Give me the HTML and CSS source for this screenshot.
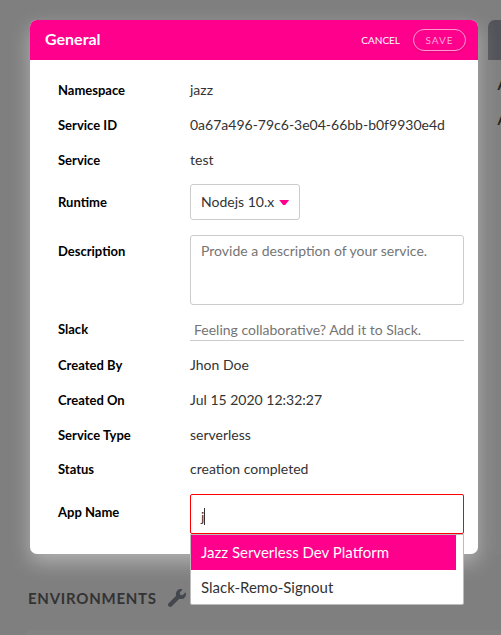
FILE: index.html
```html
<!DOCTYPE html>
<html lang="en">
<head>
<meta charset="utf-8">
<title>Service overview</title>
<link rel="stylesheet" href="styles.css">
</head>
<body>
<main class="page">
  <div class="cards">
    <section class="card">
      <header class="card-header">
        <h1 class="card-title">General</h1>
        <span class="cancel">CANCEL</span>
        <span class="save">SAVE</span>
      </header>
      <div class="card-body">
        <div class="row"><div class="label">Namespace</div><div class="value">jazz</div></div>
        <div class="row"><div class="label">Service ID</div><div class="value">0a67a496-79c6-3e04-66bb-b0f9930e4d</div></div>
        <div class="row"><div class="label">Service</div><div class="value">test</div></div>
        <div class="row row-runtime"><div class="label">Runtime</div>
          <div class="select"><span>Nodejs 10.x</span><span class="caret"></span></div></div>
        <div class="row row-description"><div class="label">Description</div>
          <div class="textarea">Provide a description of your service.</div></div>
        <div class="row row-slack"><div class="label">Slack</div>
          <div class="line-input">Feeling collaborative? Add it to Slack.</div></div>
        <div class="row"><div class="label">Created By</div><div class="value">Jhon Doe</div></div>
        <div class="row"><div class="label">Created On</div><div class="value">Jul 15 2020 12:32:27</div></div>
        <div class="row row-type"><div class="label">Service Type</div><div class="value">serverless</div></div>
        <div class="row"><div class="label">Status</div><div class="value">creation completed</div></div>
        <div class="row row-app"><div class="label">App Name</div>
          <div class="app-field">
            <div class="app-input"><span>j</span><span class="cursor"></span></div>
            <div class="menu">
              <div class="option option-active">Jazz Serverless Dev Platform</div>
              <div class="option">Slack-Remo-Signout</div>
            </div>
          </div></div>
      </div>
    </section>
    <section class="side-card">
      <div class="side-header"></div>
      <div class="side-label">A</div>
      <div class="side-label">A</div>
    </section>
  </div>
  <div class="environments">
    <h2 class="env-title">ENVIRONMENTS</h2>
    <svg class="wrench" viewBox="0 0 512 512" fill="#42484e"><path d="M507.700 109.100c-2.200-9-13.500-12.100-20.100-5.500l-74.400 74.400-67.900-11.300L334 98.900l74.400-74.400c6.600-6.600 3.400-17.900-5.700-20.200-47.400-11.700-99.600.9-136.600 37.900-39.600 39.600-50.500 97.100-34.100 147.200L18.700 402.800c-25 25-25 65.500 0 90.500s65.500 25 90.500 0l213.200-213.200c50.100 16.700 107.500 5.700 147.400-34.200 37.100-37.100 49.700-89.300 37.900-136.800z"/></svg>
  </div>
  <div class="env-panel"></div>
</main>
</body>
</html>
```

FILE: styles.css
```css
* { box-sizing: border-box; }
body {
  margin: 0;
  height: 635px;
  overflow: hidden;
  background: #7f7f7f;
  font-family: Lato, "Liberation Sans", sans-serif;
  font-size: 14px;
  line-height: 20px;
  color: #333;
}
.page { height: 635px; padding-top: 20px; overflow: hidden; }
.cards { display: flex; gap: 10px; padding-left: 30px; }
.card {
  position: relative;
  z-index: 1;
  flex: none;
  width: 448px;
  height: 534px;
  border-radius: 7px;
  background: #fff;
  box-shadow: 0 8px 20px rgba(255, 255, 255, .4);
}
.card-header {
  display: flex;
  align-items: center;
  height: 40px;
  padding: 0 12px 0 15px;
  border-radius: 7px 7px 0 0;
  background: #ff008c;
  color: #fff;
}
.card-title { flex: 1; margin: 0; padding-bottom: 2px; font-size: 16px; line-height: 20px; font-weight: 700; }
.cancel { font-size: 10px; margin-right: 13px; }
.save {
  width: 53px;
  height: 22px;
  border: 1px solid #ff99d1;
  border-radius: 11px;
  font-size: 10px;
  line-height: 21px;
  letter-spacing: 1px;
  text-align: center;
  color: #ffa6d7;
  box-shadow: 0 1px 3px rgba(0, 0, 0, .12);
}
.card-body { padding: 20px 14px 0 28px; }
.row { display: flex; height: 35px; }
.label { width: 132px; flex: none; font-size: 13px; font-weight: 700; color: #000; }
.row-runtime { height: 50px; margin-top: -1px; }
.row-runtime .label { padding-top: 8px; }
.select {
  display: flex;
  align-items: center;
  width: 110px;
  height: 36px;
  padding-left: 10px;
  border: 1px solid #ccc;
  border-radius: 3px;
}
.caret { width: 10px; height: 5px; margin: 1px 0 0 5px; background: #ff008c; clip-path: polygon(0 0, 100% 0, 60% 100%, 40% 100%); }
.row-description { height: 85px; padding-top: 1px; }
.row-description .label { padding-top: 6px; }
.textarea { width: 274px; height: 70px; padding: 5px 10px; border: 1px solid #ccc; border-radius: 3px; color: #757575; }
.row-slack { height: 36px; }
.line-input { width: 274px; height: 22px; padding: 1px 0 0 4px; border-bottom: 1px solid #ccc; color: #757575; }
.row-type { height: 34px; }
.row-app .label { padding-top: 8px; }
.app-field { position: relative; width: 274px; }
.app-input { display: flex; height: 40px; padding: 12px 10px; border: 1px solid #f00; border-radius: 2px; }
.cursor { width: 1px; height: 17px; margin-top: 1px; background: #333; }
.menu {
  position: absolute;
  top: 40px;
  left: 0;
  width: 274px;
  height: 71px;
  border: 1px solid #bbb;
  border-radius: 0 0 2px 2px;
  background: #fff;
  font-size: 15px;
}
.option { height: 35px; padding: 7px 10px; }
.option-active { width: 265px; background: #ff008c; color: #fff; }
.side-card { flex: 1; min-width: 0; height: 534px; border-radius: 7px 0 0 7px; background: rgba(255, 255, 255, .02); }
.side-header { height: 40px; margin-bottom: 15px; border-radius: 7px 0 0 0; background: #53545a; }
.side-label { height: 35px; padding-left: 9.500px; font-size: 14px; font-weight: 700; color: #222; }
.environments { display: flex; align-items: center; height: 20px; margin: 34px 0 0 28px; gap: 11px; }
.env-title { margin: 0; font-size: 15px; font-weight: 700; letter-spacing: .75px; color: #333; }
.wrench { width: 18px; height: 18px; }
.env-panel { height: 30px; margin: 22px 0 0 25px; border-radius: 7px 0 0 0; background: #828282; }
```
